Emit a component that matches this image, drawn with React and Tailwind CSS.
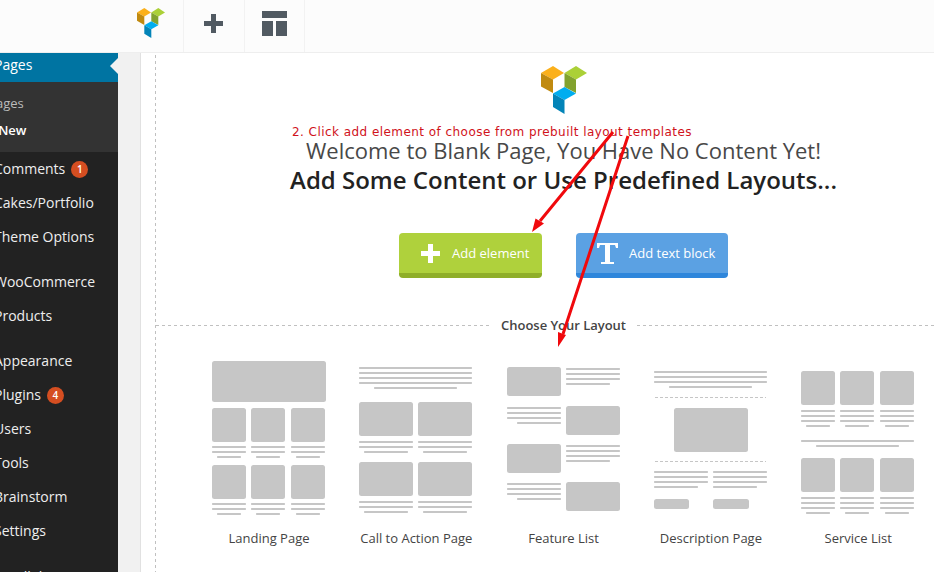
const SANS = "font-['Open_Sans','Noto_Sans',sans-serif]";

function Cubes({ className }) {
  return (
    <svg viewBox="0 0 46 48" className={className} preserveAspectRatio="none">
      <path d="M0 7 12 0 23 7 12 13.5Z" fill="#fbb01b" />
      <path d="M0 7 12 13.5V27L0 20.5Z" fill="#c08a10" />
      <path d="M23.5 7 35 0 46 7 35 13.5Z" fill="#abd037" />
      <path d="M23.5 7 35 13.5V27L23.5 21Z" fill="#82a22e" />
      <path d="M12 27.5 23.5 21 35 27.5 23.5 34Z" fill="#00adef" />
      <path d="M12 27.5 23.5 34V48L12 41Z" fill="#0384b8" />
    </svg>
  );
}

function Plus({ className }) {
  return (
    <svg width="19" height="19" viewBox="0 0 19 19" className={className} shapeRendering="crispEdges">
      <path d="M7 0h5v7h7v5h-7v7H7v-7H0V7h7z" fill="currentColor" />
    </svg>
  );
}

function Item({ label, badge }) {
  return (
    <div className="flex h-[34px] shrink-0 items-center whitespace-nowrap pb-[2px] text-[14px] text-[#eee]">
      <span className="-ml-[6px]">{label}</span>
      {badge && (
        <span className="mt-[2px] ml-[6px] flex size-[17px] items-center justify-center rounded-full bg-[#d54e21] text-[10px] font-semibold text-white">
          {badge}
        </span>
      )}
    </div>
  );
}

// Thumbnail shapes: [x, y, width, height]; two-pixel rows are text lines.
const columns = (y, lines) =>
  [0, 39, 79].flatMap((x) => [
    [x, y, 34, 34],
    ...Array.from({ length: lines }, (_, i) =>
      i === lines - 1 ? [x + 5, y + 38 + i * 5, 24, 2] : [x, y + 38 + i * 5, 34, 2]
    ),
  ]);

const pair = (y) =>
  [0, 59].flatMap((x) => [
    [x, y, 54, 34],
    [x, y + 39, 54, 2],
    [x, y + 44, 54, 2],
    [x + 5, y + 49, 44, 2],
  ]);

const lines = (x, y, w, n, lastX, lastW) =>
  Array.from({ length: n }, (_, i) => (i === n - 1 ? [lastX, y + i * 5, lastW, 2] : [x, y + i * 5, w, 2]));

const layouts = [
  { name: "Landing Page", shapes: [[0, 1, 114, 41], ...columns(48, 3), ...columns(105, 3)] },
  { name: "Call to Action Page", shapes: [...lines(0, 7, 113, 5, 15, 83), ...pair(42), ...pair(102)] },
  {
    name: "Feature List",
    shapes: [
      [0, 7, 54, 29], ...lines(59, 8, 54, 4, 59, 44),
      ...lines(0, 47, 54, 4, 10, 44), [59, 46, 54, 29],
      [0, 84, 54, 29], ...lines(59, 85, 54, 4, 59, 44),
      ...lines(0, 123, 54, 4, 10, 44), [59, 122, 54, 29],
    ],
  },
  {
    name: "Description Page",
    shapes: [
      ...lines(0, 11, 113, 4, 15, 83), [20, 48, 74, 44],
      ...lines(0, 111, 54, 4, 0, 44), ...lines(59, 111, 54, 4, 59, 44),
      [0, 139, 35, 10], [59, 139, 36, 10],
    ],
    dashes: [37.5, 101.5],
  },
  {
    name: "Service List",
    shapes: [...columns(11, 4).map(([x, y, w, h]) => [x, h === 2 ? y + 1 : y, w, h]), [0, 80, 113, 2], [15, 85, 83, 2],
      ...columns(98, 4).map(([x, y, w, h]) => [x, h === 2 ? y + 1 : y, w, h])],
  },
];

function Layout({ name, shapes, dashes = [] }) {
  return (
    <div className="flex w-[114px] shrink-0 flex-col items-center">
      <svg width="114" height="160" viewBox="0 0 114 160" fill="#c6c6c6">
        {shapes.map(([x, y, w, h], i) => (
          <rect key={i} x={x} y={y} width={w} height={h} rx={h === 2 ? 0.7 : 2.5} />
        ))}
        {dashes.map((y) => (
          <path key={y} d={`M1 ${y}H112`} stroke="#c6c6c6" strokeDasharray="3 2" />
        ))}
      </svg>
      <span className="mt-[9px] text-[13px] leading-[18px] whitespace-nowrap text-[#444]">{name}</span>
    </div>
  );
}

export default function App() {
  return (
    <div className={`relative flex h-[572px] w-[934px] flex-col overflow-hidden bg-white ${SANS}`}>
      <header className="flex h-[53px] shrink-0 border-b border-[#eee] bg-[#fcfcfc] text-[#515a62]">
        <div className="flex w-[184px] border-r border-[#f2f2f2] pt-[8px] pl-[137px]">
          <Cubes className="h-[30px] w-[28px]" />
        </div>
        <div className="flex w-[61px] border-r border-[#f2f2f2] pt-[14px] pl-[20px]">
          <Plus />
        </div>
        <div className="flex w-[60px] border-r border-[#f2f2f2] pt-[11px] pl-[17px]">
          <svg width="25" height="25" viewBox="0 0 25 25" fill="currentColor" shapeRendering="crispEdges">
            <path d="M0 0h25v7H0zM0 10h11v15H0zM14 10h11v15H14z" />
          </svg>
        </div>
      </header>
      <div className="flex min-h-0 flex-1">
        <nav className="flex w-[118px] shrink-0 flex-col overflow-hidden bg-[#222]">
          <div className="flex h-[29px] shrink-0 items-center justify-between bg-[#0074a2] text-[14px] text-white">
            <span className="-mt-[7px] -ml-[6px]">Pages</span>
            <svg width="8" height="16" viewBox="0 0 8 16" className="-mt-[4px]">
              <path d="M8 0 0 8l8 8z" fill="#f1f1f1" />
            </svg>
          </div>
          <div className="flex h-[70px] shrink-0 flex-col bg-[#333] pt-[8px] text-[13px] leading-[27px] whitespace-nowrap">
            <span className="-ml-[30px] text-[#bbb]">All Pages</span>
            <span className="-ml-[30px] font-semibold text-white">Add New</span>
          </div>
          <Item label="Comments" badge="1" />
          <Item label="Cakes/Portfolio" />
          <Item label="Theme Options" />
          <div className="h-[11px] shrink-0" />
          <Item label="WooCommerce" />
          <Item label="Products" />
          <div className="h-[11px] shrink-0" />
          <Item label="Appearance" />
          <Item label="Plugins" badge="4" />
          <Item label="Users" />
          <Item label="Tools" />
          <Item label="Brainstorm" />
          <Item label="Settings" />
          <div className="h-[12px] shrink-0" />
          <Item label="Parallel" />
        </nav>
        <div className="w-[23px] shrink-0 border-r border-[#e1e1e1] bg-[#f1f1f1]" />
        <div className="ml-[14px] w-px shrink-0 bg-[repeating-linear-gradient(to_bottom,#fff_0_2px,#c0c0c0_2px_5px,#fff_5px_6px)]" />
        <main className="flex w-[815px] shrink-0 flex-col">
          <div className="flex flex-col items-center pt-[13px]">
            <Cubes className="h-[48px] w-[46px]" />
            <p className="mt-[10px] ml-[-143px] h-[16px] text-[12px] leading-[17px] tracking-[0.45px] whitespace-nowrap text-[#d0121b] font-['DejaVu_Sans',sans-serif]">
              2. Click add element of choose from prebuilt layout templates
            </p>
            <h1 className="-mt-[5px] text-[22px] leading-[30px] whitespace-nowrap text-[#484848]">
              Welcome to Blank Page, You Have No Content Yet!
            </h1>
            <h2 className="text-[24px] leading-[30px] font-semibold whitespace-nowrap text-[#222]">
              Add Some Content or Use Predefined Layouts...
            </h2>
          </div>
          <div className="mt-[38px] flex gap-[34px] pl-[243px] text-[13px] text-white">
            <button className="flex h-[45px] w-[143px] items-center rounded-[4px] border-b-[5px] border-[#8fae29] bg-[#afd13c] pl-[22px]">
              <Plus />
              <span className="mt-px ml-[12px] whitespace-nowrap">Add element</span>
            </button>
            <button className="flex h-[45px] w-[152px] items-center rounded-[4px] border-b-[5px] border-[#2e86db] bg-[#5ba1e3] pl-[21px]">
              <svg width="21" height="21" viewBox="0 0 21 21" fill="currentColor">
                <path d="M0 0h21v5h-2l-1-3h-5v17h4v2H4v-2h4V2H3L2 5H0z" />
              </svg>
              <span className="mt-px ml-[11px] whitespace-nowrap">Add text block</span>
            </button>
          </div>
          <div className="mt-[38px] flex h-[18px] items-center gap-[11px]">
            <div className="h-px w-[334px] shrink-0 bg-[repeating-linear-gradient(to_right,#c0c0c0_0_3px,#fff_3px_6px)]" />
            <h3 className="w-[125px] shrink-0 text-center text-[13px] leading-[18px] font-semibold tracking-[-0.03px] whitespace-nowrap text-[#444]">Choose Your Layout</h3>
            <div className="h-px flex-1 bg-[repeating-linear-gradient(to_right,#c0c0c0_0_3px,#fff_3px_6px)]" />
          </div>
          <div className="mt-[26px] flex gap-[33.3px] pl-[56px]">
            {layouts.map((l) => (
              <Layout key={l.name} {...l} />
            ))}
          </div>
        </main>
      </div>
      {/* Annotation arrows lie over the page */}
      <svg width="934" height="572" className="pointer-events-none absolute inset-0" stroke="#f0090d" fill="#f0090d">
        <path d="M613 132 540 221M628 136 563 334" strokeWidth="3" fill="none" />
        <path d="M532 232 535.500 218.500 544 223.500ZM558 347 558 332 566 335Z" stroke="none" />
      </svg>
    </div>
  );
}
